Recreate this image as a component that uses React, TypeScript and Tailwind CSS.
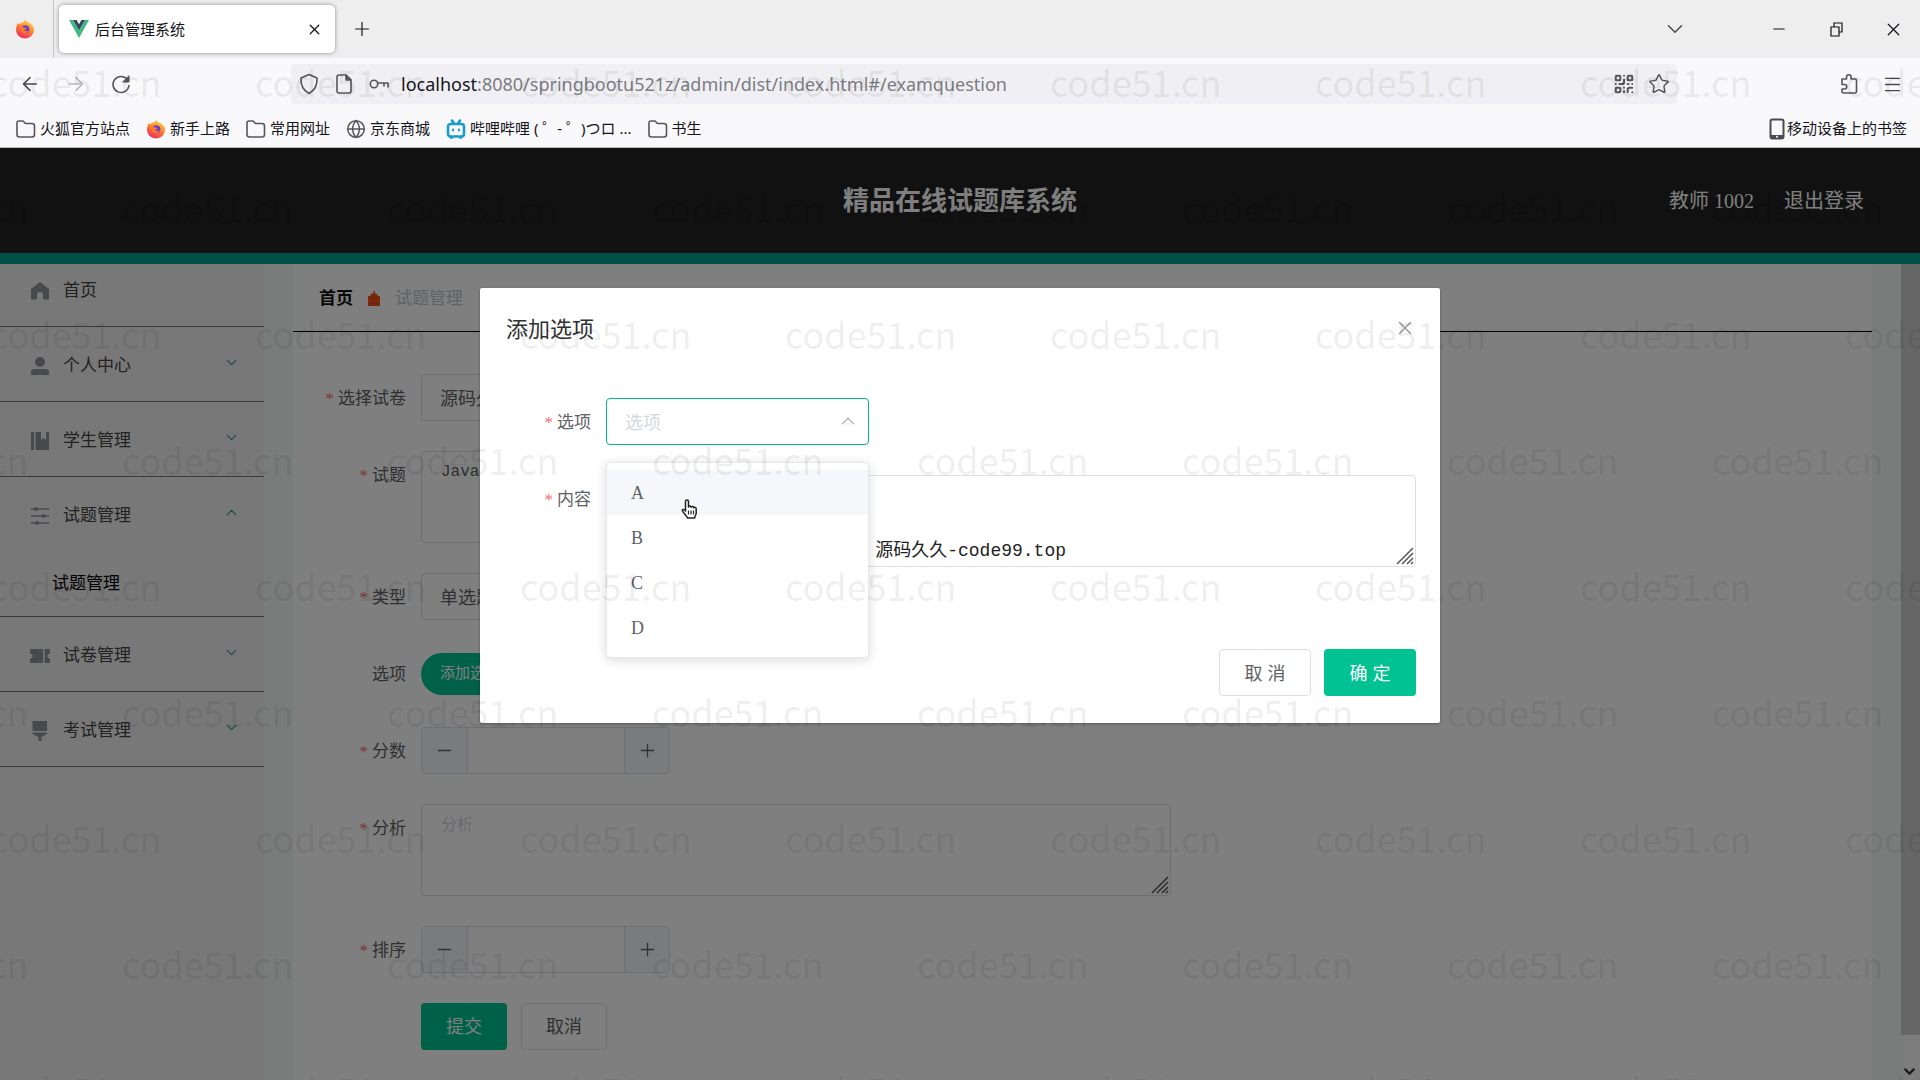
import React from 'react';
import {
  ArrowLeft,
  ArrowRight,
  ChevronDown,
  ChevronUp,
  Globe,
  Menu,
  Minus,
  Plus,
  QrCode,
  Star,
  X,
} from 'lucide-react';

function FirefoxIcon() {
  return (
    <svg width="20" height="20" viewBox="0 0 20 20" className="shrink-0">
      <defs>
        <linearGradient id="fox" x1="0.8" y1="0" x2="0.3" y2="1">
          <stop offset="0" stopColor="#ffe14a" />
          <stop offset="0.45" stopColor="#ff8a2b" />
          <stop offset="1" stopColor="#f0245e" />
        </linearGradient>
      </defs>
      <path d="M3 4 4.4 5.4C5.4 4.2 6.6 3.6 8 3.6 8.6 2.4 9.8 1.4 11 1c0 1.4 1 2 2.6 2.8 1-.2 1.6.2 2 1C18 6.6 19 8.6 19 11a9 8.5 0 0 1-18 0C1 8.2 1.8 6 3 4z" fill="url(#fox)" />
      <circle cx="10.3" cy="10.3" r="4" fill="#6b3fd0" />
      <path d="M5 8.5c1.5-1 3-.8 4 0 1 .3 2 .2 2.5.6-.3 1.2-1.7 1.2-2.2 2 .7 1.3 2.5 1.2 4.2.4-1 2.6-4 3.4-6.2 2C5.5 12.3 5 10.5 5 8.5z" fill="#ff7a2e" />
    </svg>
  );
}

function VueIcon() {
  return (
    <svg width="20" height="18" viewBox="0 0 20 18" className="shrink-0">
      <path d="M0 0h4l6 10.4L16 0h4L10 18z" fill="#41b883" />
      <path d="M4 0h3.6L10 4.2 12.4 0H16l-6 10.4z" fill="#35495e" />
    </svg>
  );
}

function BiliIcon() {
  return (
    <svg width="20" height="20" viewBox="0 0 20 20" fill="none" stroke="#1a9cc7" strokeWidth="2.6" strokeLinecap="round" className="shrink-0">
      <rect x="2" y="5" width="16" height="12.5" rx="2.5" />
      <path d="M6 1.5 8 4.5M14 1.5 12 4.5M5 18.5h1M14 18.5h1" />
      <path d="M7 10.5v1M13 10.5v1" strokeWidth="2" />
    </svg>
  );
}

function PhoneIcon() {
  return (
    <svg width="16" height="22" viewBox="0 0 16 22" fill="none" className="shrink-0">
      <rect x="1.5" y="1.5" width="13" height="19" rx="2" stroke="#4a4a52" strokeWidth="2" />
      <path d="M2 18.5h12" stroke="#4a4a52" strokeWidth="3" />
      <circle cx="8" cy="18.7" r="1" fill="#fff" />
    </svg>
  );
}

const stroke = { fill: 'none', stroke: '#55555c', strokeWidth: 1.6, strokeLinejoin: 'round', strokeLinecap: 'round' } as const;

function FolderIcon() {
  return (
    <svg width="20" height="18" viewBox="0 0 20 18" {...stroke} className="shrink-0">
      <path d="M1 3a2 2 0 0 1 2-2h4l2.5 2.5H16A2.500 2.500 0 0 1 18.500 6v8.500A2.500 2.500 0 0 1 16 17H3.500A2.500 2.500 0 0 1 1 14.500z" />
    </svg>
  );
}

function ReloadIcon() {
  return (
    <svg width="20" height="20" viewBox="0 0 20 20" {...stroke}>
      <path d="M18 11.5a8 8 0 1 1-1.8-6.2" />
      <path d="M18 2v6h-6z" fill="#55555c" strokeWidth="1" />
    </svg>
  );
}

function ShieldIcon() {
  return (
    <svg width="20" height="22" viewBox="0 0 20 22" {...stroke}>
      <path d="M10 1.5 18 5c.4 6.5-1.5 12-8 15.5C3.5 17 1.6 11.5 2 5z" />
    </svg>
  );
}

function PageIcon() {
  return (
    <svg width="18" height="20" viewBox="0 0 18 20" {...stroke}>
      <path d="M2 3a2 2 0 0 1 2-2h7l5 5v11a2 2 0 0 1-2 2H4a2 2 0 0 1-2-2z" />
      <path d="M11 1v5h5z" fill="#55555c" />
    </svg>
  );
}

function KeyIcon() {
  return (
    <svg width="20" height="14" viewBox="0 0 20 14" {...stroke}>
      <circle cx="5" cy="7" r="3.7" />
      <path d="M9 6h10v4M15 6v3" />
    </svg>
  );
}

function PuzzleIcon() {
  return (
    <svg width="18" height="22" viewBox="0 0 18 22" {...stroke}>
      <path d="M2 6h4.5V4a2.3 2.3 0 0 1 4.6 0v2H15a1.5 1.5 0 0 1 1.5 1.5v11A1.5 1.5 0 0 1 15 20H3.5A1.5 1.5 0 0 1 2 18.5V16h2.5a2.2 2.2 0 0 0 0-4.5H2z" />
    </svg>
  );
}

function RestoreIcon() {
  return (
    <svg width="13" height="15" viewBox="0 0 13 15" fill="none" stroke="#111" strokeWidth="1.2">
      <path d="M1 5h8v9H1zM4 5V1h8v9H9" />
    </svg>
  );
}

function MenuIcon({ name }: { name: string }) {
  return (
    <svg width="20" height="20" viewBox="0 0 20 20" fill="#909399" stroke="none" className="mt-1 shrink-0">
      {name === 'home' && <path d="M10 1 1 8v10.5h6V14a3 3 0 0 1 6 0v4.5h6V8z" />}
      {name === 'user' && (
        <>
          <circle cx="10" cy="6" r="5" />
          <path d="M1 19v-3a3 3 0 0 1 3-3h12a3 3 0 0 1 3 3v3z" />
        </>
      )}
      {name === 'book' && <path d="M1 1h3v18H1zM5.5 1H11v8l2.5-2L16 9V1h3v18H5.5z" />}
      {name === 'sliders' && (
        <>
          <path d="M1 2.3h18v1.4H1zM1 9.3h18v1.4H1zM1 16.3h18v1.4H1z" />
          <circle cx="6" cy="3" r="2" />
          <circle cx="13.5" cy="10" r="2" />
          <circle cx="7" cy="17" r="2" />
        </>
      )}
      {name === 'ticket' && <path d="M0 3h13v14H0v-4.5a2.5 2.5 0 0 0 0-5zM14.5 3H20v4.5a2.5 2.5 0 0 0 0 5V17h-5.5z" />}
      {name === 'brush' && <path d="M2.5 0H17v10H2.5zM2.5 11.5H17V13l-5.5 3v4h-3v-4l-6-3z" />}
    </svg>
  );
}

// Firefox style resize handle in the corner of a textarea
function Grip() {
  return (
    <svg width="18" height="18" viewBox="0 0 18 18" stroke="#555" strokeWidth="1.5" className="pointer-events-none absolute right-0.5 bottom-0.5">
      <path d="M1 17 17 1M6 17 17 6M11 17l6-6M15 17l2-2" />
    </svg>
  );
}

const bookmarks = [
  { icon: 'folder', label: '火狐官方站点' },
  { icon: 'firefox', label: '新手上路' },
  { icon: 'folder', label: '常用网址' },
  { icon: 'globe', label: '京东商城' },
  { icon: 'bili', label: '哔哩哔哩 ( ゜- ゜)つロ ...' },
  { icon: 'folder', label: '书生' },
];

function BookmarkIcon({ icon }: { icon: string }) {
  if (icon === 'firefox') return <FirefoxIcon />;
  if (icon === 'bili') return <BiliIcon />;
  if (icon === 'globe') return <Globe size={20} strokeWidth={1.8} className="text-[#55555c]" />;
  return <FolderIcon />;
}

function BrowserChrome() {
  return (
    <div className="shrink-0 border-b border-[#b8b8bc] bg-[#f9f9fb] font-['Noto_Sans','Noto_Sans_CJK_SC',sans-serif] text-[15px] text-[#15141a]">
      <div className="flex h-[58px] items-center bg-[#eeeeef]">
        <div className="flex h-full w-[54px] items-center border-r border-[#c4c4c8] pl-[15px]">
          <FirefoxIcon />
        </div>
        <div className="ml-[5px] flex h-12 w-[276px] items-center gap-1.5 rounded-[5px] bg-white pr-3 pl-[10px] shadow-[0_0_4px_rgba(0,0,0,0.4)]">
          <VueIcon />
          <span className="flex-1">后台管理系统</span>
          <button aria-label="关闭标签页"><X size={17} strokeWidth={1.8} /></button>
        </div>
        <button aria-label="新标签页" className="ml-4"><Plus size={22} strokeWidth={1.3} /></button>
        <div className="ml-auto flex items-center pr-4">
          <button aria-label="列出标签页" className="mr-[82px] text-[#4a4a52]"><ChevronDown size={26} strokeWidth={1.4} /></button>
          <button aria-label="最小化" className="mr-[42px]"><Minus size={18} strokeWidth={1.4} /></button>
          <button aria-label="还原" className="mr-[40px]"><RestoreIcon /></button>
          <button aria-label="关闭"><X size={21} strokeWidth={1.4} /></button>
        </div>
      </div>
      <div className="flex h-[52px] items-center">
        <div className="flex w-[291px] items-center gap-6 pl-[19px] text-[#4a4a52]">
          <button aria-label="后退"><ArrowLeft size={22} strokeWidth={1.7} /></button>
          <button aria-label="前进" className="text-[#b9b9bd]"><ArrowRight size={22} strokeWidth={1.7} /></button>
          <button aria-label="刷新"><ReloadIcon /></button>
        </div>
        <div className="flex h-10 flex-1 items-center rounded-[4px] bg-[#f0f0f4] pl-2">
          <ShieldIcon />
          <span className="ml-4"><PageIcon /></span>
          <span className="ml-4"><KeyIcon /></span>
          <span className="ml-3 flex-1 text-[18px] text-[#7c7c82]">
            <span className="text-[#15141a]">localhost</span>:8080/springbootu521z/admin/dist/index.html#/examquestion
          </span>
          <QrCode size={22} strokeWidth={2.2} className="text-[#55555c]" />
          <Star size={22} strokeWidth={1.6} className="mr-[7px] ml-[13px] text-[#55555c]" />
        </div>
        <div className="flex w-[243px] items-center justify-end gap-6 pr-[17px] text-[#4a4a52]">
          <button aria-label="扩展"><PuzzleIcon /></button>
          <button aria-label="菜单"><Menu size={21} strokeWidth={1.6} /></button>
        </div>
      </div>
      <div className="flex h-[37px] items-center gap-4 pr-[13px] pl-4">
        {bookmarks.map((b, i) => (
          <a key={i} href="#" className="flex items-center gap-1 whitespace-nowrap">
            <BookmarkIcon icon={b.icon} />
            {b.label}
          </a>
        ))}
        <a href="#" className="ml-auto flex items-center gap-0.5">
          <PhoneIcon />
          移动设备上的书签
        </a>
      </div>
    </div>
  );
}

const menu = [
  { icon: 'home', label: '首页' },
  { icon: 'user', label: '个人中心', arrow: 'down' },
  { icon: 'book', label: '学生管理', arrow: 'down' },
  { icon: 'sliders', label: '试题管理', arrow: 'up', children: ['试题管理'] },
  { icon: 'ticket', label: '试卷管理', arrow: 'down' },
  { icon: 'brush', label: '考试管理', arrow: 'down' },
];

function Sidebar() {
  return (
    <aside className="w-[264px] shrink-0 overflow-hidden bg-[#f0f0f0] text-[17px] text-[#444]">
      <ul className="-mt-3">
        {menu.map((m) => (
          <li key={m.label} className="border-b border-[#777]">
            <a href="#" className="flex h-[74px] items-center pr-6 pl-[30px]">
              <MenuIcon name={m.icon} />
              <span className="ml-[13px] flex-1 pt-1">{m.label}</span>
              {m.arrow === 'down' && <ChevronDown size={17} strokeWidth={1.6} className="mb-1 text-[#3a8a8c]" />}
              {m.arrow === 'up' && <ChevronUp size={17} strokeWidth={1.6} className="mb-1 text-[#3a8a8c]" />}
            </a>
            {m.children?.map((c) => (
              <a key={c} href="#" className="flex h-[65px] items-center pl-[52px] text-black">
                {c}
              </a>
            ))}
          </li>
        ))}
      </ul>
    </aside>
  );
}

interface FieldProps {
  id?: string;
  label: string;
  required?: boolean;
  labelWidth?: string;
  children: React.ReactNode;
}

function Field({ id, label, required = true, labelWidth = 'w-32', children }: FieldProps) {
  return (
    <div className="flex items-start">
      <label htmlFor={id} className={`${labelWidth} h-[47px] shrink-0 pt-px pr-[15px] text-right leading-[47px] text-[#606266]`}>
        {required && <span className="mr-1 text-[#f56c6c]">*</span>}
        {label}
      </label>
      {children}
    </div>
  );
}

function NumberBox({ id }: { id: string }) {
  return (
    <div className="flex h-[47px] w-[249px] overflow-hidden rounded-[4px] border border-[#dcdfe6]">
      <button type="button" aria-label="减少" className="flex w-[46px] items-center justify-center border-r border-[#dcdfe6] bg-[#f5f7fa] text-[#606266]">
        <Minus size={21} strokeWidth={1.5} />
      </button>
      <input id={id} type="text" inputMode="numeric" className="min-w-0 flex-1 text-center outline-none" />
      <button type="button" aria-label="增加" className="flex w-[45px] items-center justify-center border-l border-[#dcdfe6] bg-[#f5f7fa] text-[#606266]">
        <Plus size={21} strokeWidth={1.5} />
      </button>
    </div>
  );
}

const inputClass = 'h-[47px] w-[263px] rounded-[4px] border border-[#dcdfe6] bg-white px-[18px] pt-0.5 text-lg text-[#606266]';
const areaClass = 'block h-[92px] w-full resize-none rounded-[4px] border border-[#dcdfe6] bg-white px-[19px] py-2 text-base text-[#606266] outline-none placeholder:text-[#d4d7dd]';

function QuestionForm() {
  return (
    <form className="flex flex-col gap-[30px] pt-[42px] text-[17px]">
      <Field id="paper" label="选择试卷">
        <select id="paper" className={`${inputClass} appearance-none font-['Liberation_Sans','Noto_Sans_CJK_SC',sans-serif]`}>
          <option>源码久久</option>
        </select>
      </Field>
      <Field id="question" label="试题">
        <div className="relative w-[750px]">
          <textarea id="question" defaultValue="Java" className={`${areaClass} font-['Liberation_Mono','Noto_Sans_CJK_SC',monospace]`} />
          <Grip />
        </div>
      </Field>
      <Field id="type" label="类型">
        <select id="type" className={`${inputClass} appearance-none font-['Liberation_Sans','Noto_Sans_CJK_SC',sans-serif]`}>
          <option>单选题</option>
        </select>
      </Field>
      <Field label="选项" required={false}>
        <div className="flex h-[47px] items-center">
          <button type="button" className="h-[42px] rounded-full bg-[#00c292] px-[19px] text-[15px] text-white">添加选项</button>
        </div>
      </Field>
      <Field id="score" label="分数">
        <NumberBox id="score" />
      </Field>
      <Field id="analysis" label="分析">
        <div className="relative w-[750px]">
          <textarea id="analysis" placeholder="分析" className={areaClass} />
          <Grip />
        </div>
      </Field>
      <Field id="order" label="排序">
        <NumberBox id="order" />
      </Field>
      <div className="flex gap-[14px] pl-32 font-['Liberation_Sans','Noto_Sans_CJK_SC',sans-serif] text-lg">
        <button type="button" className="h-[47px] w-[86px] rounded-[4px] bg-[#00c292] text-white">提交</button>
        <button type="button" className="h-[47px] w-[86px] rounded-[4px] border border-[#dcdfe6] bg-white text-[#606266]">取消</button>
      </div>
    </form>
  );
}

function HandCursor() {
  return (
    <svg width="17" height="20" viewBox="0 0 17 20" className="pointer-events-none absolute top-9 left-[74px]">
      <path
        d="M4.5 12V2.5a1.5 1.5 0 0 1 3 0V8c.3-1.3 2.5-1.2 2.7.2.5-1.1 2.3-.9 2.5.5.7-.8 2.5-.4 2.5 1V14c0 2-1.5 3-1.5 5H6.5c-.5-2-3.500-4-5-7-.8-1.800 1.500-2.400 3 0z"
        fill="#fff"
        stroke="#222"
        strokeWidth="1.5"
        strokeLinejoin="round"
      />
      <path d="M7.5 11.5v4M10 11.5v4M12.5 11.5v4" stroke="#222" strokeWidth="1.2" />
    </svg>
  );
}

function OptionDialog() {
  return (
    <div role="dialog" aria-label="添加选项" className="w-1/2 rounded-[2px] bg-white px-6 pt-[25px] pb-[27px] shadow-[0_1px_3px_rgba(0,0,0,0.3)]">
      <div className="flex items-start justify-between pl-0.5">
        <h2 className="text-[22px] leading-[33px] text-[#303133]">添加选项</h2>
        <button type="button" aria-label="关闭" className="mt-1 text-[#909399]"><X size={22} strokeWidth={1.5} /></button>
      </div>
      <form className="mt-[52px] flex flex-col gap-[30px] text-[17px]">
        <Field id="option" label="选项" labelWidth="w-[102px]">
          <div className="relative w-[263px]">
            <select id="option" defaultValue="" className="block h-[47px] w-full appearance-none rounded-[4px] border border-[#00b98b] bg-white px-[18px] pt-0.5 font-['Liberation_Sans','Noto_Sans_CJK_SC',sans-serif] text-lg text-[#d4d7dd] outline-none">
              <option value="">选项</option>
            </select>
            <ChevronUp size={22} strokeWidth={1.4} className="pointer-events-none absolute top-3 right-2.5 text-[#b4b8bf]" />
            {/* open option list */}
            <div className="absolute top-16 left-0 z-10 w-full rounded-[4px] border border-[#e4e7ed] bg-white py-[7px] shadow-[0_2px_12px_rgba(0,0,0,0.15)]">
              <ul role="listbox" aria-label="选项">
                {['A', 'B', 'C', 'D'].map((o) => (
                  <li
                    key={o}
                    role="option"
                    aria-selected={false}
                    className={`h-[45px] px-6 text-lg leading-[47px] text-[#606266] ${o === 'A' ? 'bg-[#f5f7fa]' : ''}`}
                  >
                    {o}
                  </li>
                ))}
              </ul>
              <HandCursor />
            </div>
          </div>
        </Field>
        <Field id="content" label="内容" labelWidth="w-[102px]">
          <div className="relative flex-1">
            <textarea id="content" className={areaClass} />
            <p className="pointer-events-none absolute right-[350px] bottom-0.5 whitespace-nowrap font-['Liberation_Mono','Noto_Sans_CJK_SC',monospace] text-lg text-[#222]">
              源码久久-code99.top
            </p>
            <Grip />
          </div>
        </Field>
      </form>
      <div className="mt-[82px] flex justify-end gap-[13px] font-['Liberation_Sans','Noto_Sans_CJK_SC',sans-serif] text-lg">
        <button type="button" className="h-[47px] w-[92px] rounded-[4px] border border-[#dcdfe6] pt-0.5 text-[#606266]">取 消</button>
        <button type="button" className="h-[47px] w-[92px] rounded-[4px] bg-[#00c292] pt-0.5 text-white">确 定</button>
      </div>
    </div>
  );
}

function Watermark() {
  return (
    <div aria-hidden="true" className="pointer-events-none absolute inset-0 z-50 overflow-hidden pt-[18px] font-['Noto_Sans_CJK_SC',sans-serif] text-4xl text-black/8">
      {Array.from({ length: 9 }, (_, row) => (
        <div key={row} className={`flex h-[126px] items-center ${row % 2 ? '-ml-[143px]' : '-ml-[10px]'}`}>
          {Array.from({ length: 9 }, (_, col) => (
            <span key={col} className="w-[265px] shrink-0">code51.cn</span>
          ))}
        </div>
      ))}
    </div>
  );
}

export default function App() {
  return (
    <div className="relative flex h-screen flex-col overflow-hidden font-['Liberation_Serif','Noto_Sans_CJK_SC',serif]">
      <BrowserChrome />
      <div className="relative flex min-h-0 flex-1 flex-col bg-white">
        <header className="grid h-[116px] shrink-0 grid-cols-[1fr_auto_1fr] items-center border-b-[11px] border-[#00a08e] bg-[#222] px-14 text-white">
          <span />
          <h1 className="pt-0.5 text-[26px] font-bold">精品在线试题库系统</h1>
          <div className="flex justify-end gap-[30px] text-xl">
            <span>教师 1002</span>
            <a href="#">退出登录</a>
          </div>
        </header>
        <div className="flex min-h-0 flex-1">
          <Sidebar />
          <main className="min-w-0 flex-1 overflow-hidden bg-[#f4f9f8] px-[29px]">
            <div className="min-h-full bg-white">
              <nav className="flex h-[68px] items-center border-b border-black pt-0.5 pl-[26px] text-[17px]">
                <a href="#" className="font-bold text-[#111]">首页</a>
                <svg width="14" height="18" viewBox="0 0 14 18" className="mx-[14px]">
                  <path d="M1 6h2l1.5-2.5h2V1H8v2.5h1.500L11 6h2v10H1z" fill="#f4511e" />
                  <path d="M4 8h6M4 13h6" stroke="#c23a0c" />
                </svg>
                <span className="text-[#c0c4cc]">试题管理</span>
              </nav>
              <QuestionForm />
            </div>
          </main>
          <div className="flex w-[19px] shrink-0 flex-col justify-between bg-[#f8f8f8]">
            <div className="h-[771px] bg-[#cccccc]" />
            <ChevronDown size={17} strokeWidth={3} className="text-[#333]" />
          </div>
        </div>
        <div className="absolute inset-0 z-20 flex items-start justify-center bg-black/50 pt-[140px]">
          <OptionDialog />
        </div>
      </div>
      <Watermark />
    </div>
  );
}
